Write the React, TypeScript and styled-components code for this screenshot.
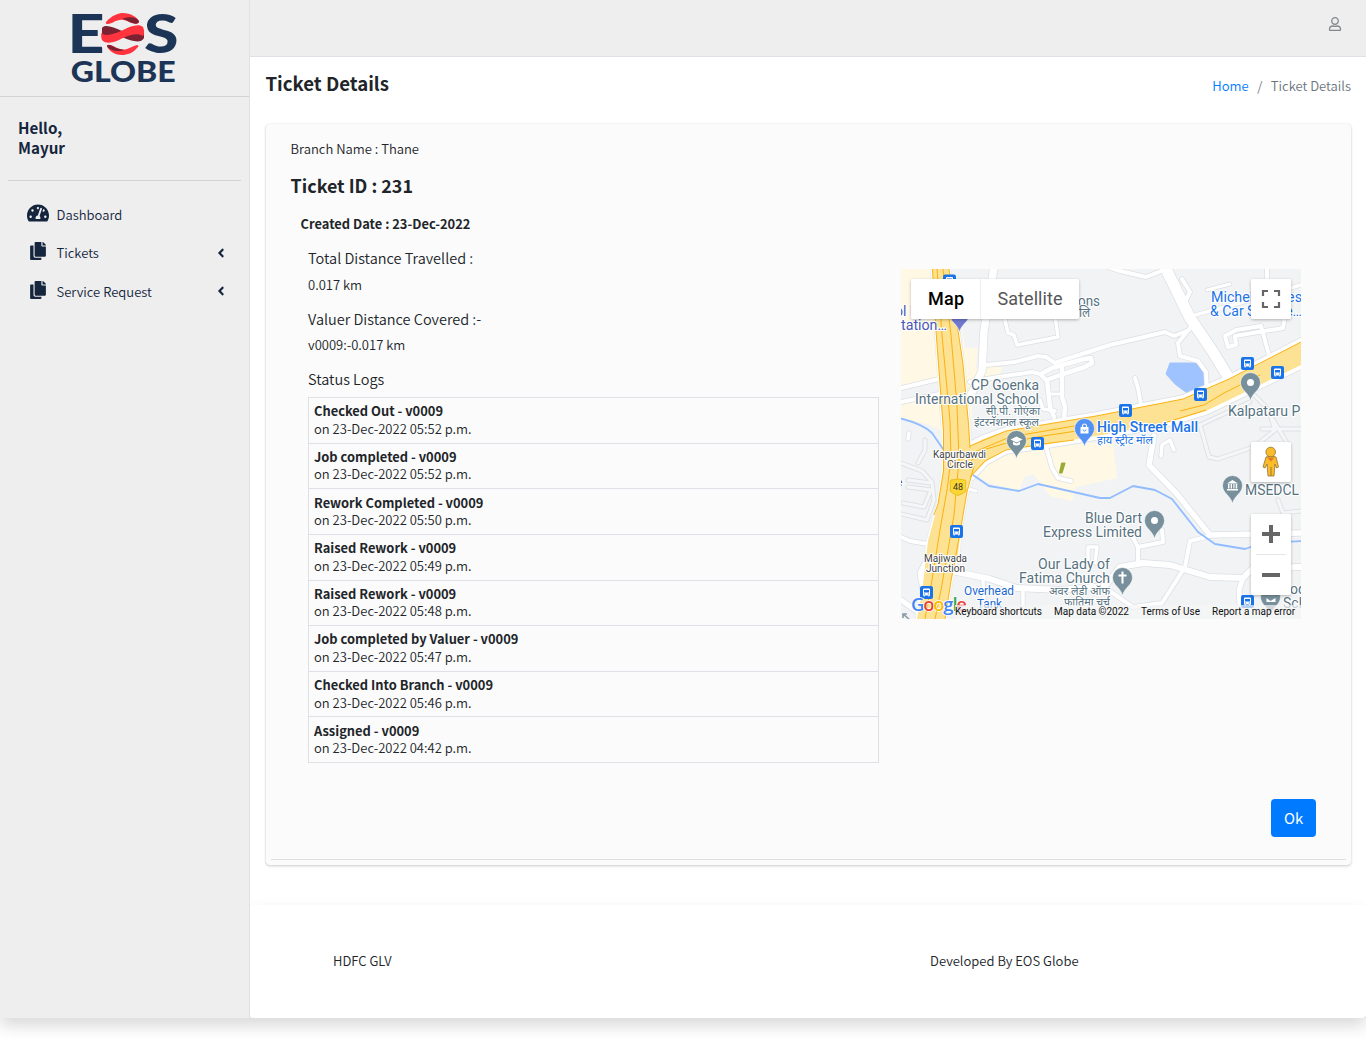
import React from "react";
import styled, { createGlobalStyle } from "styled-components";
import { FaTachometerAlt, FaCopy, FaAngleLeft, FaRegUser } from "react-icons/fa";

const sans = `"Source Sans Pro", "Noto Sans CJK JP", "Noto Sans", sans-serif`;
const roboto = `Roboto, "Noto Sans", sans-serif`;

const GlobalStyle = createGlobalStyle`
  *, *::before, *::after { box-sizing: border-box; }
  body { margin: 0; background: #fff; color: #212529; font-family: ${sans}; font-size: 13.03px; font-weight: 350; height: 1042px; overflow: hidden; }
`;

const Shell = styled.div`
  display: flex;
  width: 100%;
  height: 1018px;
  border-radius: 4px;
  box-shadow: 0 8px 16px rgba(0, 0, 0, 0.15);
`;
const Sidebar = styled.aside`
  width: 250px;
  background: #eee;
  border-right: 1px solid #dee2e6;
`;
const Brand = styled.div`
  height: 97px;
  border-bottom: 1px solid #d2d3d5;
  padding: 10px 0 0 60px;
`;
const UserPanel = styled.div`
  height: 84px;
  margin: 0 8px;
  padding: 20px 10px 0;
  border-bottom: 1px solid #d2d3d5;
  color: #14253d;
  font-size: 15.2px;
  font-weight: 700;
  line-height: 20px;
`;
const Nav = styled.nav`
  padding: 14px 8px 0;
`;
const NavItem = styled.a`
  display: flex;
  align-items: center;
  height: 38.5px;
  padding: 0 13px 0 19px;
  color: #14253d;
  svg:first-child { width: 22px; margin-right: 7.5px; margin-top: -3px; }
`;
const NavLabel = styled.span`
  flex: 1;
`;
const Page = styled.div`
  flex: 1;
  display: flex;
  flex-direction: column;
  overflow: hidden;
`;
const Topbar = styled.header`
  display: flex;
  justify-content: flex-end;
  height: 57px;
  padding: 17px 24px 0 0;
  background: #eee;
  border-bottom: 1px solid #dee2e6;
  color: #84888c;
`;
const PageHead = styled.div`
  display: flex;
  justify-content: space-between;
  height: 67px;
  padding: 11px 15px 0 15.5px;
`;
const Title = styled.h1`
  margin: 0;
  font-size: 18.6px;
  line-height: 30px;
  font-weight: 700;
`;
const Crumbs = styled.div`
  display: flex;
  gap: 8.5px;
  padding-top: 3px;
  line-height: 30px;
  color: #6c757d;
  a { color: #007bff; }
`;
const Card = styled.section`
  height: 741px;
  margin: 0 15px 0 16px;
  padding: 15px 5px 0;
  border-radius: 4px;
  background: #fbfbfb;
  box-shadow: 0 0 1px rgba(0, 0, 0, 0.125), 0 1px 3px rgba(0, 0, 0, 0.2);
`;
const Line = styled.div<{ $size?: number; $bold?: boolean; $gap?: number; $left?: number; $h?: number }>`
  margin: ${(p) => p.$gap ?? 0}px 0 0 ${(p) => p.$left ?? 0}px;
  font-size: ${(p) => p.$size ?? 13.03}px;
  font-weight: ${(p) => (p.$bold ? 700 : 350)};
  line-height: ${(p) => p.$h ?? 20}px;
`;
const Columns = styled.div`
  display: flex;
  gap: 22px;
  margin: 14px 0 0 37px;
`;
const Details = styled.div`
  width: 571px;
`;
const Logs = styled.div`
  display: grid;
  grid-template-rows: repeat(8, 45.625px);
  margin-top: 8px;
  border: 1px solid #dee2e6;
  border-bottom: 0;
`;
const LogRow = styled.div`
  padding: 4.25px 5px 0;
  border-bottom: 1px solid #dee2e6;
  line-height: 17.5px;
  b { display: block; font-size: 12.88px; }
`;
const MapFrame = styled.div`
  width: 400px;
  height: 350px;
  margin-top: 21px;
  font-weight: 400;
  svg { display: block; }
`;
const Actions = styled.div`
  display: flex;
  justify-content: flex-end;
  padding: 36px 30px 22px 0;
`;
const OkButton = styled.button`
  width: 45px;
  height: 38px;
  border: 0;
  border-radius: 4px;
  background: #007bff;
  color: #fff;
  font: 400 14.8px ${sans};
  line-height: 38px;
  padding: 0;
`;
const Rule = styled.hr`
  margin: 0;
  border: 0;
  border-top: 1px solid #dedfe0;
`;
const Footer = styled.footer`
  display: flex;
  height: 113px;
  margin-top: 40px;
  padding: 46px 0 0 83px;
  background: #fff;
  border-radius: 4px;
  line-height: 20px;
  box-shadow: 0 8px 16px rgba(0, 0, 0, 0.15);
`;
const FooterCell = styled.div`
  flex: none;
  width: 597px;
  &:last-child { width: auto; }
`;

function Logo() {
  return (
    <svg width="128" height="78" viewBox="60 10 128 78">
      <g fill="#1c3557" fontFamily="Lato, sans-serif" fontWeight="900">
        <text x="67.5" y="52.5" fontSize="53" textLength="37" lengthAdjust="spacingAndGlyphs">E</text>
        <text x="144" y="52.5" fontSize="53" textLength="34.5" lengthAdjust="spacingAndGlyphs">S</text>
        <text x="70.8" y="82.3" fontSize="27.5" textLength="105" lengthAdjust="spacingAndGlyphs">GLOBE</text>
      </g>
      <circle cx="122.6" cy="34" r="24.5" fill="#eee" />
      <path d="M106 22C112 15 119 13 123 13C130 13 138 17 139 22C138 25 133 24 127 21C118 17 113 24 108 24Q105 24 106 22Z" fill="#ff343f" />
      <path d="M122 19C128 16 137 17 139 21C139 25 133 24 129 21.500Q126 19.500 122 19Z" fill="#7c2132" />
      <path d="M107 46C107 43 114 46 118 48.500C126 52 132 46 137 45Q140 46 137 48C133 53 127 55 122 55C114 55 108 50 107 46Z" fill="#ff343f" />
      <path d="M107 46C108 43.500 113 46 116 48L124 50C118 52.500 108 50 107 46Z" fill="#7c2132" />
      <path d="M102 28C105 24 113 27 122 31C131 34 139 31 144 30V38C141 44 131 41 123 37.500C115 35 109 39 102 40Z" fill="#7c2132" />
      <path d="M101.500 33C105 37 115 34 122 30.500C130 26 139 23 143 27C144.500 30 144.500 34 143 36C136 32 127 36 119 40C110 44 104 43 102 40C101 37 101 35 101.500 33Z" fill="#ff343f" />
    </svg>
  );
}

const creamAreas = [
  "901,269 932,269 936,331 938,379 901,388",
  "961,318 965,348 978,348 976,367 1002,367 999,380 973,391 971,427 969,440",
  "901,403 942,395 943,411 943,431 930,425 901,418",
  "975,475 985,463 1010,450 1113,441 1117,478 1076,487 1072,501 1050,496 1043,487 1033,474 1025,477 1019,490 992,484",
];
const roads: { w: number; p: string }[] = [
  { w: 7.5, p: "994,267 984,331 982,371 970,397" },
  { w: 4, p: "985,365 1015,362 1038,356 1046,357 1055,363 1066,359 1110,345 1165,332 1174,336 1189,330" },
  { w: 4, p: "970,382 992,378 1032,372 1040,374 1046,380" },
  { w: 4.5, p: "1041,374 1052,368 1084,359 1091,358 1092,363 1085,367 1060,375 1047,380 1050,407 1054,417" },
  { w: 4.5, p: "1062,368 1062,397 1065,407 1064,419" },
  { w: 3, p: "1049,394 1063,394" },
  { w: 3.5, p: "1031,400 1040,400 1043,409 1055,411" },
  { w: 3.5, p: "1004,316 1008,333 1014,335 1017,345 1058,337 1055,316" },
  { w: 4, p: "901,388 943,378" },
  { w: 4, p: "901,402 944,393" },
  { w: 11, p: "1165,267 1190,318 1213,352 1230,380" },
  { w: 4, p: "1108,267 1120,271 1146,277 1164,270" },
  { w: 4, p: "1182,279 1190,292 1185,302" },
  { w: 3.5, p: "1195,315 1240,303 1301,285" },
  { w: 4, p: "1190,328 1178,343 1180,356 1198,361 1206,372 1207,390" },
  { w: 4, p: "1135,378 1138,388 1141,405" },
  { w: 4, p: "1270,359 1261,326 1236,330 1225,336 1228,347 1236,345 1235,336 1283,328 1285,316" },
  { w: 4, p: "1267,267 1267,282" },
  { w: 3, p: "1207,290 1230,284" },
  { w: 4, p: "899,536 910,541 928,544" },
  { w: 5, p: "925,563 920,573 923,590" },
  { w: 3, p: "966,488 976,491" },
  { w: 6, p: "952,571 990,579 1017,588 1060,590 1105,586 1120,567 1143,563 1170,565 1210,577 1243,578 1253,568 1303,567" },
  { w: 4, p: "1131,534 1138,547 1163,542 1162,530" },
  { w: 4, p: "1138,563 1138,547" },
  { w: 5.5, p: "1154,436 1149,465 1177,494 1210,535 1303,533" },
  { w: 4, p: "1210,536 1190,541 1185,567 1162,603 1133,607 1111,592" },
  { w: 5, p: "1243,578 1239,590 1241,619" },
  { w: 4, p: "1045,443 1052,468 1058,478 1071,481" },
  { w: 3.5, p: "1088,560 1088,547 1097,547 1095,563" },
  { w: 3.5, p: "1023,590 1023,619" },
  { w: 3.5, p: "983,580 985,619" },
  { w: 3.5, p: "1161,456 1162,445 1170,440 1174,450" },
  { w: 5, p: "901,600 925,617" },
  { w: 3.5, p: "908,439 909,433" },
];
const outlines = [
  "901,463 922,471 932,482 934,500 927,520 901,514",
  "908,480 931,483", "908,487 931,490",
  "903,503 924,507 931,490", "918,463 925,450 925,440",
  "1200,425 1209,457 1218,459 1262,444 1282,448",
  "1200,425 1228,412 1250,402",
  "1254,395 1268,409 1275,430 1259,443",
  "1262,429 1301,429", "1268,411 1287,443",
  "1278,500 1283,513 1301,511",
];
const buses = [[949.5, 281], [1247.5, 363.5], [1277.5, 372.5], [1200.5, 394.5], [1125.5, 410.5], [1037.500, 443.5], [956.500, 531.5], [926.5, 592.5], [1247.500, 601.5]];

function Bus({ x, y }: { x: number; y: number }) {
  return (
    <g transform={`translate(${x - 6.5} ${y - 6.5})`}>
      <rect width="13" height="13" rx="2" fill="#1a73e8" />
      <path d="M3 3.500Q3 2.500 4 2.500H9Q10 2.500 10 3.500V9.500H9.400V10.500H8.300V9.500H4.700V10.500H3.600V9.500H3Z" fill="#fff" />
      <path d="M4 4H9V6.500H4Z" fill="#1a73e8" />
      <path d="M4.200 8H5.200M7.800 8H8.800" stroke="#1a73e8" />
    </g>
  );
}

function Pin({ x, y, color, children }: { x: number; y: number; color: string; children?: React.ReactNode }) {
  return (
    <g transform={`translate(${x} ${y})`}>
      <path d="M0 18.500C-1.500 10-10 8-10 0A10 10 0 0 1 10 0C10 8 1.500 10 0 18.500Z" fill={color} stroke="#fff" strokeWidth="0.6" />
      {children}
    </g>
  );
}

const slate = "#56727f";
type LabelDef = { x: number; y: number; t: string; w?: number; s?: number; c?: string; b?: boolean };
const labels: LabelDef[] = [
  { x: 895, y: 316, t: "ol I", s: 14, c: "#4a55b8" },
  { x: 901, y: 330, t: "tation…", w: 46, s: 14, c: "#4a55b8" },
  { x: 1078, y: 306, t: "ons", w: 22, s: 14 },
  { x: 1079, y: 317, t: "लि", s: 12 },
  { x: 971, y: 390, t: "CP Goenka", w: 68 },
  { x: 915, y: 404, t: "International School", w: 124 },
  { x: 986, y: 415, t: "सी.पी. गोएंका", w: 54, s: 11.3 },
  { x: 974, y: 426, t: "इंटरनॅशनल स्कूल", w: 65, s: 11.3 },
  { x: 1211, y: 302, t: "Michelin Tyres", w: 91, c: "#1a73e8" },
  { x: 1210, y: 316, t: "& Car Service…", w: 92, c: "#1a73e8" },
  { x: 1228, y: 416, t: "Kalpataru Pa", w: 80 },
  { x: 1097, y: 432, t: "High Street Mall", w: 101, s: 14, c: "#1a73e8", b: true },
  { x: 1097, y: 444, t: "हाय स्ट्रीट मॉल", w: 56, s: 11.5, c: "#1a73e8" },
  { x: 933, y: 458, t: "Kapurbawdi", w: 53, s: 10, c: "#444" },
  { x: 947, y: 468, t: "Circle", w: 26, s: 10, c: "#444" },
  { x: 1245, y: 495, t: "MSEDCL", w: 54 },
  { x: 1085, y: 523, t: "Blue Dart", w: 57 },
  { x: 1043, y: 537, t: "Express Limited", w: 99 },
  { x: 924, y: 562, t: "Majiwada", w: 43, s: 10, c: "#444" },
  { x: 926, y: 571.5, t: "Junction", w: 39, s: 10, c: "#444" },
  { x: 1038, y: 569, t: "Our Lady of", w: 72 },
  { x: 1019, y: 583, t: "Fatima Church", w: 91 },
  { x: 1049, y: 594.5, t: "अवर लेडी ऑफ", w: 61, s: 11.3 },
  { x: 1064, y: 605.5, t: "फातिमा चर्च", w: 46, s: 11.3 },
  { x: 964, y: 595, t: "Overhead", w: 50, s: 12, c: "#1967d2" },
  { x: 977, y: 608, t: "Tank", w: 25, s: 12, c: "#1967d2" },
  { x: 1282, y: 594, t: "ood", s: 14 },
  { x: 1283, y: 608, t: "Sch", s: 14 },
  { x: 897, y: 486, t: "e", s: 10, c: "#444" },
];

const highway = "932,269 936,331 943,431 943,471 938,504 928,541 923,584 917,619 945,619 951,581 958,554 961,527 967,492 975,464 970,446 968.7,424 963,364 949,269";
const eastRoad = "968,447 983,439 1006,431 1096,416 1183,399 1229,379 1303,341 1303,364 1206,411 1163,424 1096,436 1043,445 1006,450 986,461 971,477 960,480";

function StreetMap() {
  return (
    <svg width="400" height="350" viewBox="901 269 400 350">
      <defs>
        <filter id="ctl" x="-10%" y="-20%" width="120%" height="150%">
          <feDropShadow dx="0" dy="1" stdDeviation="1.500" floodOpacity="0.28" />
        </filter>
      </defs>
      <rect x="901" y="269" width="400" height="350" fill="#f1f3f4" />
      {creamAreas.map((p) => <polygon key={p} points={p} fill="#fff8e5" />)}
      <polygon points="1170,363 1198,363 1204,369 1204,387 1187,393 1175,384 1166,374" fill="#9fc3ff" stroke="#9fc3ff" strokeLinejoin="round" />
      <g fill="none" strokeLinejoin="round" strokeLinecap="round">
        {outlines.map((p) => <polyline key={p} points={p} stroke="#dfe1e4" strokeWidth="5" />)}
        {outlines.map((p) => <polyline key={p} points={p} stroke="#f5f6f7" strokeWidth="3" />)}
        {roads.map((r) => <polyline key={r.p} points={r.p} stroke="#dcdfe3" strokeWidth={r.w + 1.4} />)}
        <polygon points={eastRoad} stroke="#dcdfe3" strokeWidth="9" />
        <polygon points={highway} stroke="#e4e5e4" strokeWidth="4" />
        {roads.map((r) => <polyline key={r.p} points={r.p} stroke="#fff" strokeWidth={r.w} />)}
        <polygon points={eastRoad} stroke="#fff" strokeWidth="7.500" />
        <polygon points={highway} stroke="#fff" strokeWidth="3" />
        <path d="M899 418Q923 424 932 433L943 449M973 475L989 486L1019 491L1038 484L1100 498L1110 498L1133 486L1155 490L1172 499L1198 532L1215 544L1245 549L1262 543L1303 541" stroke="#91bcff" strokeWidth="1.800" />
      </g>
      <polygon points={eastRoad} fill="#fde293" />
      <polygon points={highway} fill="#fde293" />
      <g fill="none" stroke="#f9ab00" strokeWidth="0.900">
        <path d="M932.500 269L936 331L943.500 431V471L938 504L934 515M949 269L963 364L968.500 424L970 448" />
        <path d="M937 269L942 335L950 421L951 460L947 490L940 530L932 580L925 619M943 269L951 335L957 405L959 460L954 515L948 550L941 590L935 619" />
        <path d="M970 446L1006 431L1096 416L1183 399L1229 379L1301 342M972 453L1010 437L1080 425M971 461L983 450L1010 442L1043 436L1090 429M970 477L985 461L1006 450L1043 444L1074 440M1158 425L1206 410M1180 411L1204 405L1224 393L1260 375" />
        <path d="M974 466L967 492L961 527L955 560L951 581L945 619" />
      </g>
      <path d="M1062 463.500L1064.500 463.500L1061.700 472.500L1060 472.500Z" fill="#9aab35" stroke="#9aab35" strokeWidth="2" strokeLinejoin="round" />
      {buses.map(([x, y]) => <Bus key={x + y} x={x} y={y} />)}
      <Pin x={959.500} y={314} color="#7078cf" />
      <Pin x={1016.500} y={440.500} color="#78909c">
        <path d="M-6 -1L0 -4L6 -1L0 2ZM-3.500 1V4Q0 6 3.500 4V1L0 3Z" fill="#fff" />
      </Pin>
      <Pin x={1084.500} y={428.500} color="#5491f5">
        <path d="M-4 -1.500H4V5H-4Z" fill="#fff" />
        <path d="M-2 -1V-2.500A2 2 0 0 1 2 -2.500V-1" fill="none" stroke="#fff" strokeWidth="1.200" />
        <path d="M-1.500 1A1.500 1.500 0 0 0 1.500 1" fill="none" stroke="#5491f5" />
      </Pin>
      <Pin x={1250.500} y={382.500} color="#78909c"><circle r="3.500" fill="#fff" /></Pin>
      <Pin x={1154.500} y={520.500} color="#78909c"><circle r="3.500" fill="#fff" /></Pin>
      <Pin x={1232.500} y={485.500} color="#78909c">
        <path d="M-5.500 -2L0 -5.500L5.500 -2ZM-4.500 -1.500H-3V3H-4.500ZM-1.800 -1.500H-0.500V3H-1.800ZM0.800 -1.500H2V3H0.800ZM3.200 -1.500H4.700V3H3.200ZM-5.500 3.500H5.500V5H-5.500Z" fill="#fff" />
      </Pin>
      <Pin x={1122.500} y={577.500} color="#78909c">
        <path d="M0 -6V6M-4 -2H4" stroke="#fff" strokeWidth="2" />
      </Pin>
      <Pin x={1270.500} y={597} color="#78909c"><path d="M-4 1L0 4L5 1V5H-4Z" fill="#fff" /></Pin>
      <path d="M951 480Q958 478 965 480L966 482Q965 487 966 491Q963 494 958 495.500Q953 494 950 491Q951 487 950 482Z" fill="#fbd633" stroke="#e3b914" strokeWidth="0.800" />
      <text x="953" y="490" fontFamily={roboto} fontSize="9" fill="#333">48</text>
      <g fontFamily={roboto} stroke="#fff" strokeWidth="2.200" strokeLinejoin="round" paintOrder="stroke">
        {labels.map((l) => (
          <text key={l.t + l.y} x={l.x} y={l.y} fontSize={l.s ?? 14} fill={l.c ?? slate} fontWeight={l.b ? 500 : 400} textLength={l.w} lengthAdjust="spacingAndGlyphs">{l.t}</text>
        ))}
      </g>
      <path d="M909 619L903 614M903 618V614H907" stroke="#8b9ba5" strokeWidth="1.600" fill="none" />
      <text x="911" y="611" fontFamily={`"Open Sans", sans-serif`} fontSize="18.500" fontWeight="600" textLength="56" stroke="#fff" strokeWidth="1.500" paintOrder="stroke">
        <tspan fill="#4285f4">G</tspan><tspan fill="#ea4335">o</tspan><tspan fill="#fbbc04">o</tspan><tspan fill="#4285f4">g</tspan><tspan fill="#34a853">l</tspan><tspan fill="#ea4335">e</tspan>
      </text>
      <rect x="955" y="605" width="346" height="14" fill="#f5f5f5" fillOpacity="0.700" />
      <g fontFamily={roboto} fontSize="10" fill="#111">
        <text x="955" y="615" textLength="87" lengthAdjust="spacingAndGlyphs">Keyboard shortcuts</text>
        <text x="1054" y="615" textLength="75" lengthAdjust="spacingAndGlyphs">Map data ©2022</text>
        <text x="1141" y="615" textLength="59" lengthAdjust="spacingAndGlyphs">Terms of Use</text>
        <text x="1212" y="615" textLength="83" lengthAdjust="spacingAndGlyphs">Report a map error</text>
      </g>
      <g filter="url(#ctl)" fill="#fff">
        <rect x="911" y="279" width="168" height="40" rx="2" />
        <rect x="1251" y="279" width="40" height="40" rx="2" />
        <rect x="1251" y="442" width="40" height="40" rx="2" />
        <rect x="1251" y="514" width="40" height="81" rx="2" />
      </g>
      <path d="M980.500 279V319" stroke="#eee" />
      <g fontFamily={roboto} fontSize="18">
        <text x="928" y="305" fontWeight="500" textLength="36">Map</text>
        <text x="997.500" y="305" fill="#565656" textLength="65">Satellite</text>
      </g>
      <path d="M1263 296V291H1268M1274 291H1279V296M1279 302V307H1274M1268 307H1263V302" fill="none" stroke="#666" strokeWidth="2.200" />
      <path d="M1262 534H1280M1271 525V543M1262 575H1280" stroke="#666" strokeWidth="4" />
      <path d="M1256 554.500H1286" stroke="#e6e6e6" />
      <g fill="#fbbc2c" stroke="#8f7533" strokeWidth="0.800" strokeLinejoin="round">
        <path d="M1266 457Q1270.500 455 1276 457L1278.500 467L1276.500 468L1275 464L1274 476H1268L1267 464L1265 468L1263 467Z" />
        <circle cx="1270.700" cy="452" r="4.800" />
      </g>
      <path d="M1267 457.500H1274.500L1271 461.500Z" fill="#e47a24" />
      <path d="M1271 467V476" stroke="#9a7829" />
    </svg>
  );
}

const logs = [
  ["Checked Out", "05:52"],
  ["Job completed", "05:52"],
  ["Rework Completed", "05:50"],
  ["Raised Rework", "05:49"],
  ["Raised Rework", "05:48"],
  ["Job completed by Valuer", "05:47"],
  ["Checked Into Branch", "05:46"],
  ["Assigned", "04:42"],
];

export default function App() {
  return (
    <>
      <GlobalStyle />
      <Shell>
        <Sidebar>
          <Brand><Logo /></Brand>
          <UserPanel>Hello,<br />Mayur</UserPanel>
          <Nav>
            <NavItem><FaTachometerAlt size={20} /><NavLabel>Dashboard</NavLabel></NavItem>
            <NavItem><FaCopy size={18} /><NavLabel>Tickets</NavLabel><FaAngleLeft size={14} /></NavItem>
            <NavItem><FaCopy size={18} /><NavLabel>Service Request</NavLabel><FaAngleLeft size={14} /></NavItem>
          </Nav>
        </Sidebar>
        <Page>
          <Topbar><FaRegUser size={14} /></Topbar>
          <PageHead>
            <Title>Ticket Details</Title>
            <Crumbs><a>Home</a><span>/</span><span>Ticket Details</span></Crumbs>
          </PageHead>
          <Card>
            <Line $left={19.6}>Branch Name : Thane</Line>
            <Line $left={19.6} $gap={14} $size={17.9} $h={24} $bold>Ticket ID : 231</Line>
            <Line $left={29.6} $gap={17} $size={12.88} $bold>Created Date : 23-Dec-2022</Line>
            <Columns>
              <Details>
                <Line $size={14.5}>Total Distance Travelled :</Line>
                <Line $gap={7}>0.017 km</Line>
                <Line $gap={14} $size={14.5}>Valuer Distance Covered :-</Line>
                <Line $gap={6}>v0009:-0.017 km</Line>
                <Line $gap={14} $size={14.5}>Status Logs</Line>
                <Logs>
                  {logs.map(([name, time], i) => (
                    <LogRow key={i}><b>{name} - v0009</b>on 23-Dec-2022 {time} p.m.</LogRow>
                  ))}
                </Logs>
              </Details>
              <MapFrame><StreetMap /></MapFrame>
            </Columns>
            <Actions><OkButton>Ok</OkButton></Actions>
            <Rule />
          </Card>
          <Footer>
            <FooterCell>HDFC GLV</FooterCell>
            <FooterCell>Developed By EOS Globe</FooterCell>
          </Footer>
        </Page>
      </Shell>
    </>
  );
}
